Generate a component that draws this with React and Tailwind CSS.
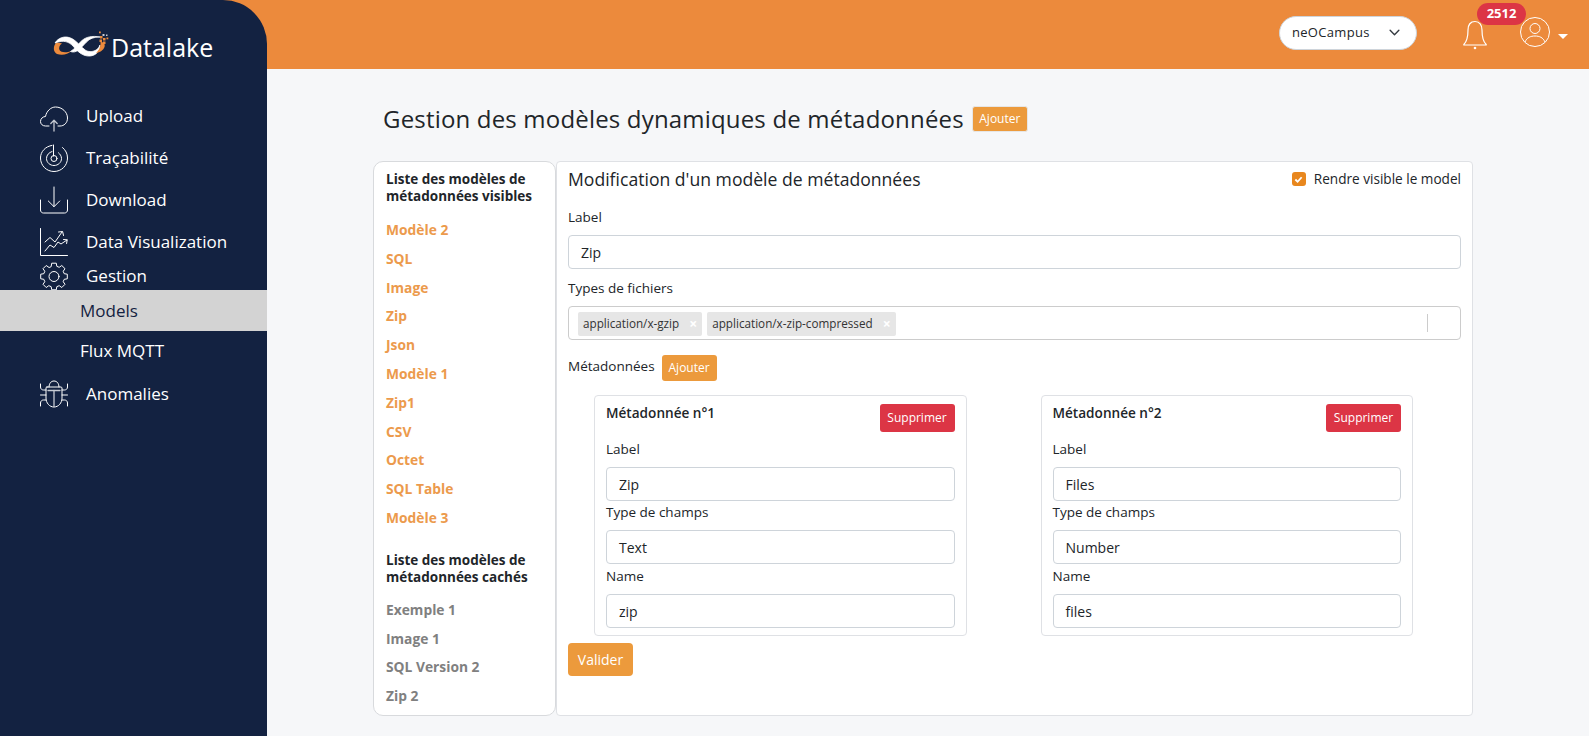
import React from 'react';

const Icon = ({ children }) => (
  <svg viewBox="0 0 28 28" className="w-7 h-7 shrink-0 overflow-visible" fill="none" stroke="white" strokeWidth="1" strokeLinecap="round" strokeLinejoin="round">
    {children}
  </svg>
);

const CloudIcon = () => (
  <Icon>
    <path d="M9 24H5.5C2.5 24 0.5 22 0.5 19.5C0.5 16.5 3 14.5 5.5 14.5C6.5 9 11 5 15.5 5C22 5 27.5 10 27.5 16C27.5 21 24 24 20 24H18" />
    <path d="M14 29V18.5M10.8 21.5L14 18.3L17.2 21.5" stroke="#c6cad2" strokeWidth="1.3" />
  </Icon>
);

const RadarIcon = () => (
  <Icon>
    <path d="M12 1.4C5.5 2.4 0.5 7.5 0.5 14C0.5 21.5 6.5 27.5 14 27.5C21.5 27.5 27.5 21.5 27.5 14C27.5 9.5 25.5 6 22.5 3.5" />
    <path d="M12 7.5C9 8.5 6.5 11 6.5 14.5C6.5 18.5 10 21.5 14 21.5C18 21.5 21.5 18.5 21.5 14.5C21.5 12 20 10 18.5 8.8" />
    <circle cx="14" cy="14.5" r="3" />
    <path d="M13.5 1V12" />
  </Icon>
);

const DownloadIcon = () => (
  <Icon>
    <path d="M14 1V20.5M8.3 15L14 20.7L19.7 15" />
    <path d="M0.5 14V24C0.5 25.8 1.8 27 3.5 27H24.5C26.2 27 27.5 25.8 27.5 24V14" />
  </Icon>
);

const ChartIcon = () => (
  <Icon>
    <path d="M0.5 0.5V27.5H27.5" />
    <path d="M5 14L10 9.5L15 14L22 4M18.5 4L22.6 3.5L23.5 7.5" />
    <path d="M5 23L10 17L14 19.5L18 14L21 16L27 12M23.5 11.5L27.2 11.8L26.6 15.5" />
  </Icon>
);

// 8 square teeth round the centre
const gearPath = (() => {
  const pts = [];
  for (let i = 0; i < 8; i++) {
    const a = (i * Math.PI) / 4;
    [[10.6, -0.27], [13.5, -0.17], [13.5, 0.17], [10.6, 0.27]].forEach(([r, d]) => {
      pts.push(`${(14 + r * Math.sin(a + d)).toFixed(1)} ${(14.5 - r * Math.cos(a + d)).toFixed(1)}`);
    });
  }
  return `M${pts.join('L')}Z`;
})();

const GearIcon = () => (
  <Icon>
    <path d={gearPath} />
    <circle cx="14" cy="14.5" r="5" />
  </Icon>
);

const BugIcon = () => (
  <Icon>
    <path d="M9 7C9 3.5 11 1 14 1C17 1 19 3.5 19 7" />
    <path d="M7 7H21C21.6 7 22 7.5 22 8V18C22 23 18.5 27 14 27C9.5 27 6 23 6 18V8C6 7.5 6.4 7 7 7Z" />
    <path d="M8 10.5H20" stroke="#c6cad2" strokeWidth="1.3" />
    <path d="M14 10.5V26.5" stroke="#c6cad2" strokeWidth="1.3" />
    <path d="M0.5 4V7C0.5 9 2 10 3.5 10H6M27.5 4V7C27.5 9 26 10 24.5 10H22" />
    <path d="M0.5 15H6M27.5 15H22" />
    <path d="M0.5 26V23C0.5 21 2 20 3.5 20H6M27.5 26V23C27.5 21 26 20 24.5 20H22" />
  </Icon>
);

const Logo = () => (
  <svg viewBox="0 0 64 36" className="w-16 h-9 shrink-0">
    <path d="M6 15C3 18 3 24 7 26C12 27.5 18 26.5 21.5 23C16 25 11 24.5 9.5 22C8.5 19.5 9.5 17 12 15.5C10 14.5 8 14.5 6 15Z" fill="#ec8a3c" />
    <path d="M5 15C8 10 14 8 19 9.5C25 11 29 17 34 21C37 24 41 24 44 23C47 22 49 20 50 17C50 23 46 27.5 40 28C33 28.5 28 24 23 18C19 14 14 11.5 5 15Z" fill="white" stroke="white" strokeWidth="0.8" />
    <path d="M20.5 23.5C25 21 28 16 32 12.5C36 9 42 7.5 50 9C44 9 39.5 10.5 36.5 14C34 16.5 31 20 28.5 22C26 24 23 24.5 20.5 23.5Z" fill="white" stroke="white" strokeWidth="0.8" />
    <path d="M50.5 14C53.5 14 55.5 16 54.5 19C53.5 22 50 24.5 46 25C49 22.5 51 18.5 50.5 14Z" fill="#ec8a3c" />
    <g fill="#ec8a3c">
      <rect x="50" y="8" width="2.5" height="2.5" />
      <rect x="53" y="10" width="2.5" height="2.5" />
      <rect x="49.5" y="11.5" width="2.5" height="2.5" />
      <rect x="53" y="13.5" width="2.5" height="2.5" />
      <rect x="56.5" y="9.5" width="1.8" height="1.8" />
      <rect x="49" y="3.5" width="1.8" height="1.8" />
    </g>
    <g fill="#c6cad2">
      <rect x="52.5" y="6" width="2" height="2" />
      <rect x="56" y="6.5" width="1.5" height="1.5" />
    </g>
  </svg>
);

const NavItem = ({ icon, label, height }) => (
  <div className={`flex items-center gap-[18px] pl-10 text-white text-[17px] ${height}`}>
    {icon}
    <span>{label}</span>
  </div>
);

const visibles = ['Modèle 2', 'SQL', 'Image', 'Zip', 'Json', 'Modèle 1', 'Zip1', 'CSV', 'Octet', 'SQL Table', 'Modèle 3'];
const caches = ['Exemple 1', 'Image 1', 'SQL Version 2', 'Zip 2'];

const Input = ({ value }) => (
  <div className="h-[34px] flex items-center px-3 pt-[1px] bg-white border border-[#ced4da] rounded-[4px] text-[14px] text-[#212529]">
    {value}
  </div>
);

const Tag = ({ label }) => (
  <span className="h-6 mt-[1px] flex items-center gap-[10px] px-[5px] bg-[#e6e6e6] rounded-[2px] text-[11.7px] text-[#333333]">
    {label}
    <span className="text-white font-bold text-[14px] leading-none">×</span>
  </span>
);

const MetaCard = ({ num, label, type, name }) => (
  <div className="ml-[26px] w-[372.5px] h-[241px] bg-white border border-[#dfe1e5] rounded-[4px] px-[11px] pt-2">
    <div className="flex justify-between items-start h-[28px]">
      <span className="font-semibold text-[13.6px] text-[#212529] leading-[17px]">Métadonnée n°{num}</span>
      <button className="h-[28px] w-[75px] bg-[#dc3545] text-white text-[12px] rounded-[3px]">Supprimer</button>
    </div>
    <div className="text-[13.5px] text-[#212529] h-[35px] flex items-center">Label</div>
    <Input value={label} />
    <div className="text-[13.5px] text-[#212529] h-[29px] pb-[6px] flex items-center">Type de champs</div>
    <Input value={type} />
    <div className="text-[13.5px] text-[#212529] h-[30px] pb-[6px] flex items-center">Name</div>
    <Input value={name} />
  </div>
);

export default function App() {
  return (
    <div className="h-[736px] w-full flex overflow-hidden bg-[#ec8a3c] font-['Open_Sans','Noto_Sans',sans-serif]">
      <aside className="w-[267px] shrink-0 bg-[#132241] rounded-tr-[44px] flex flex-col">
        <div className="flex items-start pl-[50px] pt-[28px] h-[98px]">
          <Logo />
          <span className="text-white text-[25px] leading-[36px] -ml-[3px] mt-[1px]">Datalake</span>
        </div>
        <NavItem icon={<CloudIcon />} label="Upload" height="h-[42px] mt-[-3px]" />
        <NavItem icon={<RadarIcon />} label="Traçabilité" height="h-[42px]" />
        <NavItem icon={<DownloadIcon />} label="Download" height="h-[42px]" />
        <NavItem icon={<ChartIcon />} label="Data Visualization" height="h-[42px]" />
        <NavItem icon={<GearIcon />} label="Gestion" height="h-[26px]" />
        <div className="h-[41px] mt-[1px] flex items-center pl-20 bg-[#d3d3d3] text-[#132241] text-[17px]">Models</div>
        <div className="h-[40px] flex items-center pl-20 text-white text-[17px]">Flux MQTT</div>
        <NavItem icon={<BugIcon />} label="Anomalies" height="h-[42px] mt-[2px]" />
      </aside>

      <div className="flex-1 flex flex-col min-w-0">
        <header className="h-[69px] shrink-0 flex items-center justify-end pr-[21px] bg-[#ec8a3c]">
          <div className="w-[138px] h-[34px] flex items-center justify-between pl-3 pr-[16px] bg-white border border-[#ced4da] rounded-[17px] text-[13px] tracking-[0.3px] text-[#212529] mb-1">
            neOCampus
            <svg viewBox="0 0 12 8" className="w-[11px] h-[7px]" fill="none" stroke="#343a40" strokeWidth="1.6" strokeLinecap="round" strokeLinejoin="round">
              <path d="M1 1.5L6 6.5L11 1.5" />
            </svg>
          </div>
          <div className="relative ml-[46px] w-6 h-[30px]">
            <svg viewBox="0 0 24 30" className="w-6 h-[30px]" fill="none" stroke="white" strokeWidth="1.2" strokeLinejoin="round">
              <path d="M12 1.5C7.5 1.5 5 5 5 10C5 16 4.5 21 0.8 24.5V25H23.2V24.5C19.5 21 19 16 19 10C19 5 16.5 1.5 12 1.5Z" />
              <circle cx="12" cy="28" r="1.3" fill="white" stroke="none" />
            </svg>
            <span className="absolute -top-[17px] left-[14px] w-[49px] h-[22px] flex items-center justify-center rounded-[11px] bg-[#dc3545] text-white text-[13px] font-bold">2512</span>
          </div>
          <div className="ml-[33px] flex items-center gap-[8px] mb-[5px]">
            <svg viewBox="0 0 30 30" className="w-[30px] h-[30px]" fill="none" stroke="white" strokeWidth="1">
              <circle cx="15" cy="15" r="14.5" />
              <circle cx="15" cy="11.5" r="5" />
              <path d="M5 25C7 20.5 10.5 19 15 19C19.5 19 23 20.5 25 25" />
            </svg>
            <span className="w-0 h-0 border-x-[5px] border-x-transparent border-t-[5px] border-t-white mt-2" />
          </div>
        </header>

        <main className="flex-1 bg-[#f6f7f9] pl-[106px] pr-[116px]">
          <div className="flex items-center h-[92px] pt-[7px] pl-[10px]">
            <h1 className="text-[24px] tracking-[0.18px] font-medium text-[#212529]">Gestion des modèles dynamiques de métadonnées</h1>
            <button className="ml-2 h-[26px] w-[56px] bg-[#ec9a3c] border border-[#e6e6e6] rounded-[3px] text-white text-[12px]">Ajouter</button>
          </div>

          <div className="flex h-[555px]">
            <div className="w-[183px] shrink-0 bg-white border border-[#d8dadd] rounded-[10px] pl-3 pt-[9px]">
              <h2 className="text-[13.5px] leading-[17px] font-bold text-[#212529]">Liste des modèles de métadonnées visibles</h2>
              <ul className="mt-[11px]">
                {visibles.map((m) => (
                  <li key={m} className="h-[28.8px] flex items-center text-[13.8px] font-bold text-[#ec9a4c]">{m}</li>
                ))}
              </ul>
              <h2 className="mt-[19px] text-[13.5px] leading-[17px] font-bold text-[#212529]">Liste des modèles de métadonnées cachés</h2>
              <ul className="mt-[10px]">
                {caches.map((m) => (
                  <li key={m} className="h-[28.8px] flex items-center text-[13.8px] font-bold text-[#808080]">{m}</li>
                ))}
              </ul>
            </div>

            <div className="flex-1 min-w-0 bg-white border border-[#dfe1e5] rounded-[4px] px-[11px]">
              <div className="flex justify-between items-center h-[35px]">
                <h2 className="text-[17.6px] font-medium text-[#212529]">Modification d'un modèle de métadonnées</h2>
                <label className="flex items-center gap-[8px] text-[13.6px] text-[#212529]">
                  <span className="w-[14px] h-[14px] flex items-center justify-center bg-[#e8871e] rounded-[3px]">
                    <svg viewBox="0 0 10 10" className="w-[9px] h-[9px]" fill="none" stroke="white" strokeWidth="2">
                      <path d="M1.5 5L4 7.5L8.5 2.5" />
                    </svg>
                  </span>
                  Rendre visible le model
                </label>
              </div>
              <div className="h-[38px] pt-[3px] flex items-center text-[13.5px] text-[#212529]">Label</div>
              <Input value="Zip" />
              <div className="h-[37px] pt-[1px] flex items-center text-[13.5px] text-[#212529]">Types de fichiers</div>
              <div className="h-[34px] flex items-center gap-[5px] pl-[9px] pr-[32px] bg-white border border-[#cccccc] rounded-[4px]">
                <Tag label="application/x-gzip" />
                <Tag label="application/x-zip-compressed" />
                <span className="ml-auto w-px h-[18px] bg-[#cccccc]" />
              </div>
              <div className="mt-[14px] h-[27px] flex items-center gap-[7px] text-[13.5px] text-[#212529]">
                <span className="mb-[3px]">Métadonnées</span>
                <button className="h-[26px] w-[55px] bg-[#ec9a3c] rounded-[3px] text-white text-[12px]">Ajouter</button>
              </div>
              <div className="grid grid-cols-2 mt-[14px]">
                <MetaCard num="1" label="Zip" type="Text" name="zip" />
                <MetaCard num="2" label="Files" type="Number" name="files" />
              </div>
              <button className="mt-[7px] w-[65px] h-[33px] bg-[#ec9a3c] rounded-[4px] text-white text-[14px]">Valider</button>
            </div>
          </div>
        </main>
      </div>
    </div>
  );
}
